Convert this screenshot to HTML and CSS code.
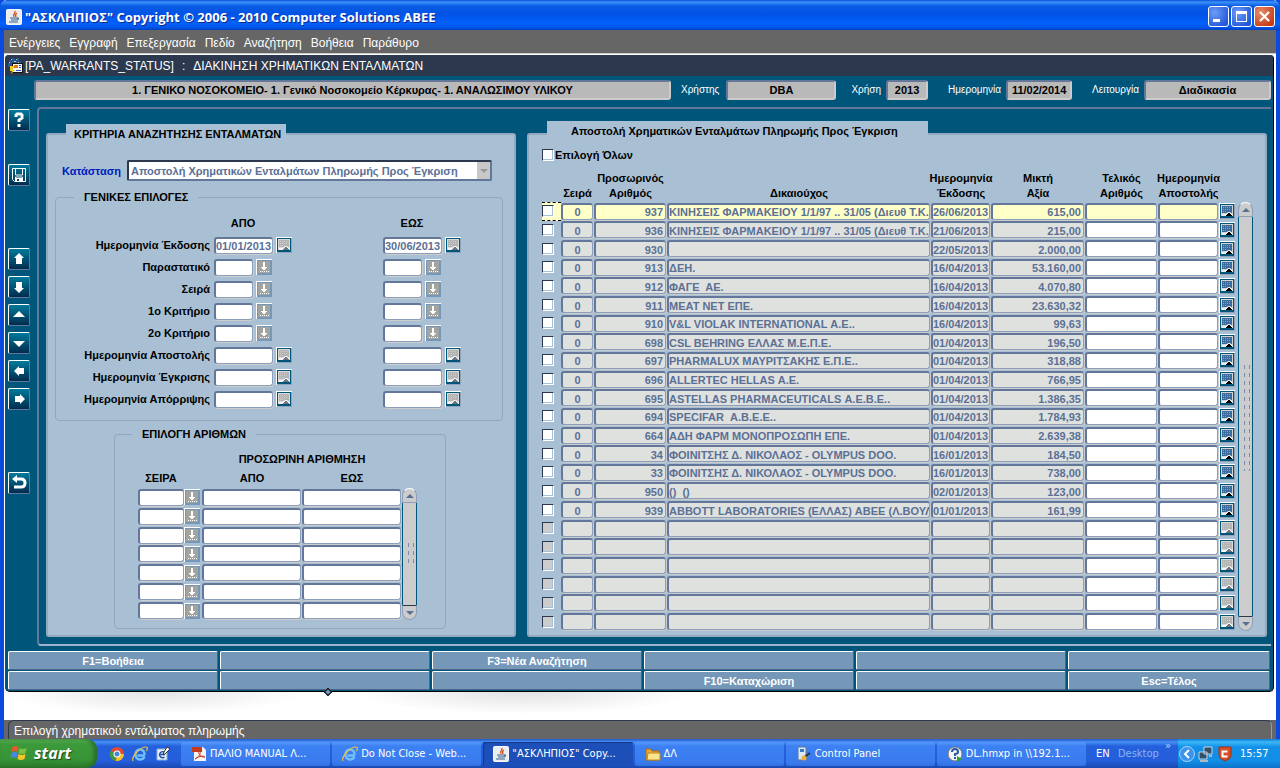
FILE: index.html
```
<!DOCTYPE html>
<html lang="el">
<head>
  <meta charset="UTF-8">
  <meta name="viewport" content="width=device-width, initial-scale=1.0">
  <title>ΑΣΚΛΗΠΙΟΣ</title>
  <link rel="stylesheet" href="styles.css">
</head>
<body>

<!-- Shared icons -->
<svg class="sprite" aria-hidden="true">
  <symbol id="ic-java" viewBox="0 0 16 16">
    <rect x="0.5" y="0.5" width="15" height="15" rx="1" fill="#e9ecf0" stroke="#f8f8f8"/>
    <path d="M9 2c1 2-3 3-1 6M11 4c-2 1-2 2-1 4" fill="none" stroke="#d8501c" stroke-width="1.3"/>
    <path d="M4 9h7M5 11h5M11 9c2-1 2 2-1 2M3 13h9" fill="none" stroke="#39618c" stroke-width="1.2"/>
  </symbol>
  <symbol id="ic-cal" viewBox="0 0 16 16">
    <path d="M0 0h16v1H1v15H0z" fill="#fff"/>
    <path d="M15 1h1v15H1v-1h14z" fill="#8fa3bb"/>
    <rect x="1" y="1" width="14" height="14" fill="#00557a"/>
    <rect x="2" y="2" width="12" height="11" fill="#d4d4d0"/>
    <rect x="3" y="3" width="10" height="7" fill="#3c6c9e"/>
    <path d="M4 4h1v1H4zM6 4h1v1H6zM8 4h1v1H8zM10 4h1v1h-1zM4 6h1v1H4zM6 6h1v1H6zM8 6h1v1H8zM10 6h1v1h-1zM4 8h1v1H4zM6 8h1v1H6z" fill="#7fa3cb"/>
    <path d="M3 11h4l2-2h2l3 3v1H3z" fill="#eee"/>
    <path d="M7 13v-1h1v-1h1v-1h2v1h1v1h1v1z" fill="#000"/>
  </symbol>
  <symbol id="ic-cal-off" viewBox="0 0 16 16">
    <path d="M0 0h16v1H1v15H0z" fill="#fff"/>
    <path d="M15 1h1v15H1v-1h14z" fill="#8fa3bb"/>
    <rect x="1" y="1" width="14" height="14" fill="#00557a"/>
    <rect x="2" y="2" width="12" height="11" fill="#dadad8"/>
    <rect x="3" y="3" width="10" height="7" fill="#b4b4b4"/>
    <path d="M4 4h1v1H4zM6 4h1v1H6zM8 4h1v1H8zM10 4h1v1h-1zM4 6h1v1H4zM6 6h1v1H6zM8 6h1v1H8zM10 6h1v1h-1zM4 8h1v1H4zM6 8h1v1H6z" fill="#cdcdcd"/>
    <path d="M3 11h4l2-2h2l3 3v1H3z" fill="#f4f4f4"/>
    <path d="M7 13v-1h1v-1h1v-1h2v1h1v1h1v1z" fill="#6c7680"/>
  </symbol>
  <symbol id="ic-lov" viewBox="0 0 16 16">
    <path d="M0 0h16v1H1v15H0z" fill="#fff"/>
    <path d="M1 1h15v15H1z" fill="#7597b8"/>
    <path d="M2 2h12v12H2z" fill="#a3a3a0"/>
    <path d="M7 3h2v5h2v1h-1v1H9v1H7v-1H6V9H5V8h2z" fill="#fff"/>
    <path d="M4 12.500h9" stroke="#fff" stroke-dasharray="1 1"/>
  </symbol>
  <symbol id="ic-ie" viewBox="0 0 16 16">
    <path d="M13 9.500H5.500M12.500 9C13 5 10 3.500 8 3.500 5.500 3.500 3.500 5.500 3.500 8.500s2 5 4.500 5c2 0 3.500-1 4.500-2.500" fill="none" stroke="#6fc0f8" stroke-width="2.400"/>
    <path d="M1 15C-1 11 8 1 14 1c2 0 1.500 2 .5 4" fill="none" stroke="#f0c040" stroke-width="1.200"/>
  </symbol>
</svg>

<div class="window">
  <header class="titlebar">
    <svg class="icon16"><use href="#ic-java"/></svg>
    <h1>"ΑΣΚΛΗΠΙΟΣ" Copyright © 2006 - 2010 Computer Solutions ABEE</h1>
    <div class="win-buttons">
      <button class="win-btn" aria-label="Minimize"><svg viewBox="0 0 19 19"><path d="M4 12h7v3H4z" fill="#fff"/></svg></button>
      <button class="win-btn" aria-label="Maximize"><svg viewBox="0 0 19 19"><path d="M4 4h11v11H4zM5 7v7h9V7z" fill="#fff" fill-rule="evenodd"/></svg></button>
      <button class="win-btn close" aria-label="Close"><svg viewBox="0 0 19 19"><path d="M5 5l9 9M14 5l-9 9" stroke="#fff" stroke-width="2.200"/></svg></button>
    </div>
  </header>

  <nav class="menubar">
    <a href="#">Ενέργειες</a>
    <a href="#">Εγγραφή</a>
    <a href="#">Επεξεργασία</a>
    <a href="#">Πεδίο</a>
    <a href="#">Αναζήτηση</a>
    <a href="#">Βοήθεια</a>
    <a href="#">Παράθυρο</a>
  </nav>

  <div class="form-window">
    <div class="form-title">
      <svg class="icon16" viewBox="0 0 16 16">
        <path d="M1 2h3V0h3v2h2V0h2v3h2v3H4v3H0V5h1z" fill="#2f5590"/>
        <path d="M3 1h1v1H3zM8 1h1v1H8zM1 4h1v1H1zM6 3h2v1H6zM10 4h1v1h-1z" fill="#9fd0a0"/>
        <path d="M4 5h11v10H4z" fill="#111"/>
        <path d="M5 6h9v8H5z" fill="#f4f4f4"/>
        <path d="M6 7h4v3H6z" fill="#e07818"/>
        <path d="M11 7h2v1h-2zM11 9h2v1h-2zM8 12h5v1H8z" fill="#3050c0"/>
        <path d="M2 8h4v2H5v2h2l-4 4 1-3H2z" fill="#f0d020"/>
      </svg>
      <span>[PA_WARRANTS_STATUS]</span><span>:</span><span>ΔΙΑΚΙΝΗΣΗ ΧΡΗΜΑΤΙΚΩΝ ΕΝΤΑΛΜΑΤΩΝ</span>
    </div>

    <div class="info-row">
      <output class="info f-unit">1. ΓΕΝΙΚΟ ΝΟΣΟΚΟΜΕΙΟ- 1. Γενικό Νοσοκομείο Κέρκυρας- 1. ΑΝΑΛΩΣΙΜΟΥ ΥΛΙΚΟΥ</output>
      <label for="user">Χρήστης</label><output id="user" class="info f-user">DBA</output>
      <label for="year">Χρήση</label><output id="year" class="info f-year">2013</output>
      <label for="date">Ημερομηνία</label><output id="date" class="info f-date">11/02/2014</output>
      <label for="mode">Λειτουργία</label><output id="mode" class="info f-mode">Διαδικασία</output>
    </div>

    <div class="main">
      <div class="toolbar">
        <button aria-label="Βοήθεια"><svg viewBox="0 0 20 20"><path d="M7 7V5l1-1h4l1 1v3l-3 2v2M10 14v3" fill="none" stroke="#fff" stroke-width="3"/></svg></button>
        <button class="save" aria-label="Αποθήκευση"><svg viewBox="0 0 20 20"><path d="M3.500 3.500h13v13h-11l-2-2zM6.500 4v6h7V4M6.500 16v-4h7v4" fill="none" stroke="#fff"/><path d="M7 13h6v3H7z" fill="#fff"/><path d="M8 14h2v2H8z" fill="#00406a"/></svg></button>
        <button class="first-nav" aria-label="Προηγούμενη"><svg viewBox="0 0 20 20"><path d="M10 4l5 5h-2v6H7V9H5z" fill="#fff"/></svg></button>
        <button aria-label="Επόμενη"><svg viewBox="0 0 20 20"><path d="M10 16l5-5h-2V5H7v6H5z" fill="#fff"/></svg></button>
        <button aria-label="Πάνω"><svg viewBox="0 0 20 20"><path d="M10 6l6 6H4z" fill="#fff"/></svg></button>
        <button aria-label="Κάτω"><svg viewBox="0 0 20 20"><path d="M10 14l6-6H4z" fill="#fff"/></svg></button>
        <button aria-label="Αριστερά"><svg viewBox="0 0 20 20"><path d="M5 10l5-5v2h5v6h-5v2z" fill="#fff"/></svg></button>
        <button aria-label="Δεξιά"><svg viewBox="0 0 20 20"><path d="M16 10l-5-5v2H6v6h5v2z" fill="#fff"/></svg></button>
        <button class="undo" aria-label="Έξοδος"><svg viewBox="0 0 20 20"><path d="M6 6h6q4 0 4 4t-4 4H5" fill="none" stroke="#fff" stroke-width="3"/><path d="M3 6l5-4v8z" fill="#fff"/></svg></button>
      </div>

      <div class="canvas">
        <section class="panel criteria">
          <h2 class="tab">ΚΡΙΤΗΡΙΑ ΑΝΑΖΗΤΗΣΗΣ ΕΝΤΑΛΜΑΤΩΝ</h2>
          <div class="state-row">
            <label for="state">Κατάσταση</label>
            <div class="select-box">
              <select id="state"><option>Αποστολή Χρηματικών Ενταλμάτων Πληρωμής Προς Έγκριση</option></select>
              <span class="select-arrow"></span>
            </div>
          </div>

          <fieldset class="general">
            <legend>ΓΕΝΙΚΕΣ ΕΠΙΛΟΓΕΣ</legend>
            <div class="range-grid" id="ranges">
              <span></span><b>ΑΠΟ</b><b>ΕΩΣ</b>
            </div>
          </fieldset>

          <fieldset class="numbers">
            <legend>ΕΠΙΛΟΓΗ ΑΡΙΘΜΩΝ</legend>
            <div class="table-wrap">
              <table class="num-table">
                <colgroup><col class="n-series"><col class="n-lov"><col><col></colgroup>
                <thead>
                  <tr><th></th><th></th><th colspan="2">ΠΡΟΣΩΡΙΝΗ ΑΡΙΘΜΗΣΗ</th></tr>
                  <tr><th>ΣΕΙΡΑ</th><th></th><th>ΑΠΟ</th><th>ΕΩΣ</th></tr>
                </thead>
                <tbody id="num-rows"></tbody>
              </table>
              <div class="scroll">
                <button class="cap up" aria-label="Πάνω"></button>
                <div class="track"><i class="grip short"></i></div>
                <button class="cap down" aria-label="Κάτω"></button>
              </div>
            </div>
          </fieldset>
        </section>

        <section class="panel results">
          <h2 class="tab">Αποστολή Χρηματικών Ενταλμάτων Πληρωμής Προς Έγκριση</h2>
          <div class="all-row"><input type="checkbox" id="all"><label for="all">Επιλογή Όλων</label></div>
          <div class="table-wrap">
            <table class="res-table">
              <colgroup>
                <col class="c-check"><col class="c-series"><col class="c-num"><col>
                <col class="c-date"><col class="c-value"><col class="c-final"><col class="c-sent"><col class="c-cal">
              </colgroup>
              <thead>
                <tr>
                  <th></th><th>Σειρά</th><th><span class="wide">Προσωρινός<br>Αριθμός</span></th><th>Δικαιούχος</th>
                  <th><span class="wide">Ημερομηνία<br>Έκδοσης</span></th><th>Μικτή<br>Αξία</th><th>Τελικός<br>Αριθμός</th>
                  <th><span class="wide">Ημερομηνία<br>Αποστολής</span></th><th></th>
                </tr>
              </thead>
              <tbody id="res-rows"></tbody>
            </table>
            <div class="scroll">
              <button class="cap up" aria-label="Πάνω"></button>
              <div class="track"><i class="grip"></i></div>
              <button class="cap down" aria-label="Κάτω"></button>
            </div>
          </div>
        </section>
      </div>
    </div>

    <div class="keys">
      <button>F1=Βοήθεια</button><button></button><button>F3=Νέα Αναζήτηση</button><button></button><button></button><button></button>
      <button></button><button></button><button></button><button>F10=Καταχώριση</button><button></button><button>Esc=Τέλος</button>
    </div>
    <span class="handle"></span>
  </div>

  <div class="backdrop"></div>
  <footer class="status"><span>Επιλογή χρηματικού εντάλματος πληρωμής</span></footer>
</div>

<div class="taskbar">
  <button class="start">
    <svg viewBox="0 0 20 18"><path d="M3 3q3-2 6 0L8 8Q5 6 2 8z" fill="#e8582c"/><path d="M10 4q3 2 7 0l-1 5q-4 2-7 0z" fill="#7cc142"/><path d="M2 9q3-2 6 0l-1 5q-3-2-6 0z" fill="#4a86ea"/><path d="M9 10q3 2 7 0l-1 5q-4 2-7 0z" fill="#f7c52c"/></svg>
    start
  </button>
  <div class="quick">
    <a href="#" aria-label="Chrome"><svg viewBox="0 0 16 16"><circle cx="8" cy="8" r="7" fill="#dd4b32"/><path d="M8 8L1.500 5A7 7 0 0 0 7 15z" fill="#3f9a45"/><path d="M8 8h7a7 7 0 0 1-8 7z" fill="#f2c32c"/><circle cx="8" cy="8" r="3.500" fill="#fff"/><circle cx="8" cy="8" r="2.500" fill="#4787d8"/></svg></a>
    <a href="#" aria-label="Internet Explorer"><svg><use href="#ic-ie"/></svg></a>
    <a href="#" aria-label="Show desktop"><svg viewBox="0 0 16 16"><path d="M2 3h10v11H2z" fill="#e8f0f8" stroke="#8ab0d8"/><path d="M10 8.500H5.500M10.500 8a3 3 0 1 0-1 3" fill="none" stroke="#1c50a8" stroke-width="1.500"/><path d="M12 1l3 2-5 5-2 1 1-3z" fill="#fff" stroke="#333"/></svg></a>
  </div>
  <div class="tasks">
    <button><svg viewBox="0 0 16 16"><path d="M3 1h9l3 3v11H3z" fill="#f6f6f6"/><path d="M1 1h10v5H1z" fill="#c43c20"/><path d="M4 13c6-3 6-8 4-8s1 7 6 6c-2-2-8 0-10 2z" fill="none" stroke="#d03a20"/></svg>ΠΑΛΙΟ MANUAL Λ...</button>
    <button><svg><use href="#ic-ie"/></svg>Do Not Close - Web...</button>
    <button class="active"><svg><use href="#ic-java"/></svg>"ΑΣΚΛΗΠΙΟΣ" Copy...</button>
    <button><svg viewBox="0 0 16 16"><path d="M1 3h5l1 2h7v9H1z" fill="#e8a838" stroke="#a86c10"/><path d="M3 7h12v7H2z" fill="#fbe58c" stroke="#c08820"/></svg>ΔΛ</button>
    <button><svg viewBox="0 0 16 16"><path d="M2 1h8v13H2z" fill="#dce8f4" stroke="#5878a0"/><path d="M4 3h4v3H4z" fill="#3878c0"/><path d="M7 12l7-5" stroke="#333" stroke-width="2"/><circle cx="8" cy="12" r="2.500" fill="#f0b030"/></svg>Control Panel</button>
    <button><svg viewBox="0 0 16 16"><circle cx="8" cy="8" r="7" fill="#f4f4f4" stroke="#777"/><path d="M5 6q0-3 3-3t3 3q0 2-3 2v2M8 11v2" fill="none" stroke="#2858a8" stroke-width="2"/><path d="M10 10l5 3-5 3z" fill="#30a030"/></svg>DL.hmxp in \\192.1...</button>
  </div>
  <div class="lang"><span class="en">EN</span><span class="desk">Desktop</span><span class="more">»</span></div>
  <div class="tray">
    <svg class="chev" viewBox="0 0 16 16"><circle cx="8" cy="8" r="7.500" fill="#3c94ec" stroke="#a8d4fc"/><path d="M10 4L6 8l4 4" fill="none" stroke="#fff" stroke-width="2"/></svg>
    <svg viewBox="0 0 16 16"><path d="M6 1h8v7H6zM1 6h8v7H1z" fill="#30506c" stroke="#c8d4e0"/><path d="M2 15h8M11 10h3" stroke="#b0b8c0" stroke-width="2"/></svg>
    <svg viewBox="0 0 16 16"><path d="M2 1h12v8q0 4-6 6-6-2-6-6z" fill="#d85028" stroke="#9c3010"/><path d="M10.500 5.500h-5v5h5" fill="none" stroke="#fff" stroke-width="2"/></svg>
    <time>15:57</time>
  </div>
</div>

<script>
  // label, field kind, from, to
  const ranges = [
    ['Ημερομηνία Έκδοσης', 'date', '01/01/2013', '30/06/2013'],
    ['Παραστατικό', 'code'],
    ['Σειρά', 'code'],
    ['1ο Κριτήριο', 'code'],
    ['2ο Κριτήριο', 'code'],
    ['Ημερομηνία Αποστολής', 'date'],
    ['Ημερομηνία Έγκρισης', 'date'],
    ['Ημερομηνία Απόρριψης', 'date']
  ];

  const warrants = [
    ['937', 'ΚΙΝΗΣΕΙΣ ΦΑΡΜΑΚΕΙΟΥ 1/1/97 .. 31/05 (Διευθ Τ.Κ.:1', '26/06/2013', '615,00'],
    ['936', 'ΚΙΝΗΣΕΙΣ ΦΑΡΜΑΚΕΙΟΥ 1/1/97 .. 31/05 (Διευθ Τ.Κ.:1', '21/06/2013', '215,00'],
    ['930', '', '22/05/2013', '2.000,00'],
    ['913', 'ΔΕΗ.', '16/04/2013', '53.160,00'],
    ['912', 'ΦΑΓΕ  ΑΕ.', '16/04/2013', '4.070,80'],
    ['911', 'MEAT NET ΕΠΕ.', '16/04/2013', '23.630,32'],
    ['910', 'V&L VIOLAK INTERNATIONAL Α.Ε..', '16/04/2013', '99,63'],
    ['698', 'CSL BEHRING ΕΛΛΑΣ Μ.Ε.Π.Ε.', '01/04/2013', '196,50'],
    ['697', 'PHARMALUX ΜΑΥΡΙΤΣΑΚΗΣ Ε.Π.Ε..', '01/04/2013', '318,88'],
    ['696', 'ALLERTEC HELLAS Α.Ε.', '01/04/2013', '766,95'],
    ['695', 'ASTELLAS PHARMACEUTICALS Α.Ε.Β.Ε..', '01/04/2013', '1.386,35'],
    ['694', 'SPECIFAR  Α.Β.Ε.Ε..', '01/04/2013', '1.784,93'],
    ['664', 'ΑΔΗ ΦΑΡΜ ΜΟΝΟΠΡΟΣΩΠΗ ΕΠΕ.', '01/04/2013', '2.639,38'],
    ['34', 'ΦΟΙΝΙΤΣΗΣ Δ. ΝΙΚΟΛΑΟΣ - OLYMPUS DOO.', '16/01/2013', '184,50'],
    ['33', 'ΦΟΙΝΙΤΣΗΣ Δ. ΝΙΚΟΛΑΟΣ - OLYMPUS DOO.', '16/01/2013', '738,00'],
    ['950', '()  ()', '02/01/2013', '123,00'],
    ['939', 'ABBOTT LABORATORIES (ΕΛΛΑΣ) ΑΒΕΕ (Λ.ΒΟΥΛΙ', '01/01/2013', '161,99']
  ];
  const visibleRows = 23;

  function iconButton(icon, label) {
    return `<button class="icon-btn" aria-label="${label}"><svg><use href="#${icon}"/></svg></button>`;
  }

  function field(value, cls, label) {
    return `<input type="text" class="field ${cls}" value="${value || ''}" aria-label="${label}">`;
  }

  document.getElementById('ranges').innerHTML += ranges.map(([label, kind, from, to], i) => {
    const btn = kind === 'date' ? iconButton('ic-cal-off', 'Ημερολόγιο') : iconButton('ic-lov', 'Λίστα');
    return `<label for="from${i}">${label}</label>
      <div class="pair"><input type="text" id="from${i}" class="field ${kind}" value="${from || ''}">${btn}</div>
      <div class="pair">${field(to, kind, label + ' έως')}${btn}</div>`;
  }).join('');

  document.getElementById('num-rows').innerHTML = Array.from({ length: 7 }, () => `<tr>
    <td>${field('', 'series', 'Σειρά')}</td><td>${iconButton('ic-lov', 'Λίστα')}</td>
    <td>${field('', '', 'Από')}</td><td>${field('', '', 'Έως')}</td></tr>`).join('');

  document.getElementById('res-rows').innerHTML = Array.from({ length: visibleRows }, (_, i) => {
    const w = warrants[i];
    const [num, name, date, value] = w || ['', '', '', ''];
    return `<tr class="${i === 0 ? 'current' : ''}">
      <td class="check"><input type="checkbox" aria-label="Επιλογή" ${w ? '' : 'disabled'}></td>
      <td>${field(w ? '0' : '', 'ro center', 'Σειρά')}</td>
      <td>${field(num, 'ro right', 'Προσωρινός Αριθμός')}</td>
      <td>${field(name, 'ro', 'Δικαιούχος')}</td>
      <td>${field(date, 'ro', 'Ημερομηνία Έκδοσης')}</td>
      <td>${field(value, 'ro right', 'Μικτή Αξία')}</td>
      <td>${field('', '', 'Τελικός Αριθμός')}</td>
      <td>${field('', '', 'Ημερομηνία Αποστολής')}</td>
      <td>${iconButton(w ? 'ic-cal' : 'ic-cal-off', 'Ημερολόγιο')}</td></tr>`;
  }).join('');
</script>

</body>
</html>
```
FILE: styles.css
```
* { box-sizing: border-box; }
body { margin: 0; min-height: 100vh; display: flex; flex-direction: column; font: bold 11px/14px "Liberation Sans", Arial, sans-serif; color: #000; background: #fff; }
button { margin: 0; padding: 0; border: 0; font: inherit; color: inherit; background: none; }
h1, h2 { margin: 0; font-size: inherit; }
.sprite { position: absolute; width: 0; height: 0; }
.icon16 { width: 16px; height: 16px; flex: none; }

/* Window frame */
.window { flex: 1; display: flex; flex-direction: column; border: solid #0a4ae0; border-width: 0 4px; background: #fff; }
.titlebar { height: 30px; margin: 0 -4px; padding: 3px 5px 0 6px; display: flex; align-items: center; gap: 3px; color: #fff; border-radius: 7px 7px 0 0; background: linear-gradient(#0a4cd8, #3c93fa 2px, #0a5ce4 6px, #0153e6 14px, #0361fb 24px, #0252e0 28px, #0140c0); }
.titlebar h1 { flex: 1; font: bold 13px/16px "Open Sans", sans-serif; text-shadow: 1px 1px #0a2a90; }
.win-buttons { display: flex; gap: 2px; }
.win-btn { width: 21px; height: 21px; border: 1px solid #fff; border-radius: 3px; background: radial-gradient(circle at 30% 30%, #6d9cf8, #2258d8 80%); }
.win-btn.close { background: radial-gradient(circle at 30% 30%, #e88c6c, #c83c14 80%); }
.win-btn svg { display: block; width: 19px; height: 19px; }
.menubar { height: 24px; padding: 2px 5px 0; display: flex; align-items: center; gap: 9px; background: #666; border-bottom: 1px solid #ccc; }
.menubar a { color: #fff; text-decoration: none; font: 12px/16px "Liberation Sans", Arial, sans-serif; }

/* Form */
.form-window { position: relative; margin: 1px 2px 0 1px; background: #00557a; border-bottom: 1px solid #000; border-right: 1px solid #000; border-radius: 4px 4px 5px 5px; }
.form-title { height: 21px; padding: 0 3px; display: flex; align-items: center; gap: 8px; color: #fff; background: #2b384e; border-radius: 4px 4px 0 0; font-weight: normal; font-size: 12px; }
.form-title .icon16 { margin-right: -7px; }
.info-row { display: flex; align-items: center; padding: 4px 2px 0 29px; color: #fff; }
.info-row label { font-weight: normal; font-size: 10px; text-align: right; padding: 0 5px 0 10px; }
.info { height: 20px; padding: 2px 4px 0; text-align: center; color: #000; background: #b9b9b9; border: 2px solid #63779b; border-right-color: #ccc; border-bottom-color: #ccc; border-radius: 3px; line-height: 13px; white-space: nowrap; }
.f-unit { flex: 1; }
.f-unit + label { padding-right: 7px; }
.f-user { width: 110px; }
.f-year { width: 42px; padding: 2px 0 0; }
.f-date { width: 66px; padding: 2px 0 0; }
.f-mode { width: 127px; }
.f-user + label { padding-left: 15px; }
.f-year + label, .f-date + label { padding-left: 20px; }

.main { display: flex; margin-top: 7px; }
.toolbar { width: 32px; padding: 2px 0 0 3px; display: flex; flex-direction: column; gap: 6px; }
.toolbar button { width: 22px; height: 22px; border: 1px solid #fff; border-right-color: #63779b; border-bottom-color: #63779b; border-radius: 2px; background: linear-gradient(#007a9c, #002c4e); }
.toolbar button:hover { background: #007a9c; }
.toolbar svg { display: block; width: 20px; height: 20px; }
.toolbar .save { margin-top: 27px; }
.toolbar .first-nav { margin-top: 56px; }
.toolbar .undo { margin-top: 56px; }
.canvas { flex: 1; min-width: 0; margin-right: 2px; padding: 24px 4px 7px 7px; display: flex; gap: 11px; border: 2px solid #63779b; border-right: 0; border-bottom-color: #9fb3cb; border-radius: 4px 0 0 4px; }
.panel { background: #a9c0d4; border: 2px solid #94a9bf; border-radius: 3px; }
.criteria { width: 470px; flex: none; }
.results { flex: 1; min-width: 0; }
.tab { width: fit-content; height: 19px; margin: -11px 0 0 18px; padding: 3px 5px 0 8px; background: #a9c0d4; font-size: 11px; line-height: 14px; white-space: nowrap; }
.results .tab { height: 21px; margin-top: -14px; padding: 3px 30px 0 24px; }

/* Fields */
.field { display: block; width: 100%; height: 17px; margin: 0; padding: 1px 0 0; font: inherit; line-height: 13px; color: #5b7095; background: #fff; border: solid #63779b; border-width: 2px 1px 1px 2px; border-right-color: #8c9fba; border-bottom-color: #8c9fba; border-radius: 3px; box-shadow: 1px 1px #ccc; }
.field.ro { background: #dfe1df; }
.field.center { text-align: center; }
.field.right { text-align: right; padding-right: 2px; }
.field:focus { outline: none; background: #ffffc8; }
.icon-btn, .icon-btn svg { display: block; width: 16px; height: 16px; }
input[type="checkbox"] { appearance: none; display: block; width: 12px; height: 12px; margin: 0; background: #fff; border: 1px solid #2b384e; border-right-color: #fff; border-bottom-color: #fff; box-shadow: inset -1px -1px #a9c0d4; }
input[type="checkbox"]:disabled { background: #ccc; }
input[type="checkbox"]:checked { background: #63779b; }

/* Criteria */
.state-row { display: flex; align-items: center; margin: 17px 22px 0 14px; gap: 6px; color: #0018c0; }
.state-row label { flex: none; }
.select-box { flex: 1; position: relative; }
.select-box select { display: block; width: 100%; height: 21px; padding: 0 16px 0 2px; appearance: none; font: inherit; color: #5b7095; background: #fff; border: 2px solid #2b384e; border-right-color: #63779b; border-bottom-color: #63779b; border-radius: 2px; }
.select-arrow { position: absolute; top: 2px; right: 2px; bottom: 2px; width: 13px; background: #c8c8c8; pointer-events: none; }
.select-arrow::after { content: ""; display: block; margin: 7px 3px; border: 4px solid transparent; border-top-color: #999; border-bottom: 0; }
fieldset { min-width: 0; margin: 0; padding: 0; border: 1px solid #94a5bd; border-radius: 4px; }
legend { margin-left: 18px; padding: 0 10px; }
.general { margin: 9px 11px 0 7px; padding-bottom: 10px; }
.range-grid { display: grid; grid-template-columns: 154px 169px 1fr; grid-auto-rows: 22px; align-items: center; padding-top: 8px; }
.range-grid b { width: 58px; margin-left: 4px; text-align: center; }
.range-grid label { text-align: right; }
.pair { display: flex; gap: 3px; padding-left: 4px; }
.pair .date { width: 59px; }
.pair .code { width: 39px; }
.numbers { width: 332px; margin: 6px 0 0 66px; padding: 0 28px 8px 23px; }
.numbers legend { margin-left: -6px; }
.table-wrap { display: flex; }
table { border-collapse: collapse; table-layout: fixed; width: 100%; }
th, td { padding: 0; }
th { font-weight: bold; vertical-align: bottom; line-height: 15px; }
.num-table { flex: 1; height: 179px; }
.num-table th { height: 19px; line-height: 19px; }
.num-table thead tr:first-child th { height: 28px; }
.num-table td:nth-child(n+3) { padding-right: 1px; }
.n-series { width: 46px; }
.n-lov { width: 18px; }

.scroll { flex: none; width: 15px; margin-top: 47px; display: flex; flex-direction: column; }
.cap { height: 15px; border: 1px solid #8c9fba; background: #ccc; }
.cap.up { border-radius: 8px 8px 0 0; border-top-color: #fff; }
.cap.down { border-radius: 0 0 8px 8px; border-top-color: #2b384e; }
.cap::after { content: ""; display: block; width: 0; margin: 0 auto; border: 4px solid transparent; }
.cap.up::after { border-bottom-color: #5b7095; border-top: 0; }
.cap.down::after { border-top-color: #5b7095; border-bottom: 0; }
.track { flex: 1; display: flex; align-items: center; justify-content: center; background: #ccc; border: solid #00557a; border-width: 0 1px; }
.grip { width: 8px; height: 108px; background: radial-gradient(#7c8cae 1px, transparent 1px) 0 0 / 5px 8px; }
.grip.short { height: 26px; }

/* Results */
.all-row { display: flex; align-items: center; gap: 1px; margin: 4px 0 0 13px; height: 18px; }
.results .table-wrap { margin: 6px 12px 0 13px; padding-bottom: 4px; }
.res-table { flex: 1; height: 461px; }
.res-table thead th { height: 32px; padding-bottom: 1px; }
.wide { display: block; margin: 0 -6px; }
.res-table td { padding-right: 1px; }
.c-check { width: 19px; }
.c-series { width: 33px; }
.c-num { width: 73px; }
.c-date { width: 60px; }
.c-value { width: 94px; }
.c-final { width: 73px; }
.c-sent { width: 61px; }
.c-cal { width: 18px; }
.current .field, .current .field.ro { background: #ffffc8; }
.current .check { background: #ffffc8; border: dashed #000; border-width: 1px 0; }
.results .scroll { margin-top: 32px; margin-left: 1px; }

/* Function keys */
.keys { display: grid; grid-template-columns: repeat(5, 211fr) 203fr; gap: 1px; padding: 5px 2px 1px 3px; }
.keys button { height: 19px; color: #fff; background: #7597b8; border: 1px solid #fff; border-right-color: #4a6488; border-bottom-color: #4a6488; border-radius: 2px; margin-right: 1px; }
.keys button:active { background: #63779b; }
.handle { position: absolute; left: 320px; bottom: -4px; width: 6px; height: 6px; background: #7597b8; border: 1px solid #000; transform: rotate(45deg); }

.backdrop { flex: 1; min-height: 28px; background: radial-gradient(ellipse 150px 22px at 150px 0, #e4e4e4, transparent), radial-gradient(ellipse 170px 22px at 520px 0, #e2e2e2, transparent), #fff; }
.status { height: 19px; padding-left: 4px; color: #fff; background: #666; }
.status span { display: block; height: 19px; margin-right: 4px; padding: 3px 5px 0; border: 1px solid #2b384e; border-bottom: 0; border-right-color: #8c9fba; border-radius: 6px 6px 0 0; font: 12px/14px "Liberation Sans", Arial, sans-serif; }

/* Taskbar */
.taskbar { height: 29px; display: flex; align-items: stretch; color: #fff; font: 11px/14px "DejaVu Sans Condensed", "Noto Sans", sans-serif; background: linear-gradient(#2458c8, #4690f4 3px, #2560dc 7px, #245edb 22px, #1a48b0); }
.taskbar svg { width: 16px; height: 16px; flex: none; }
.start { width: 97px; display: flex; align-items: center; gap: 4px; padding: 0 0 2px 9px; border-radius: 0 10px 10px 0; font: italic bold 16px/20px "Open Sans", sans-serif; text-shadow: 1px 1px 1px #1c4a18; background: linear-gradient(#5fb55c, #3c9a3a 5px, #389436 20px, #2a7a2a); box-shadow: inset -3px 0 4px #2a6a2a; }
.taskbar .start svg { width: 21px; height: 18px; }
.quick { width: 84px; padding-left: 12px; display: flex; align-items: center; gap: 7px; }
.quick a, .quick svg { display: block; }
.tasks { flex: 1; min-width: 0; display: grid; grid-template-columns: repeat(6, 1fr); gap: 2px; padding: 3px 0 2px; }
.tasks button { min-width: 0; display: flex; align-items: center; gap: 3px; padding-left: 10px; white-space: nowrap; overflow: hidden; border-radius: 2px; background: linear-gradient(#5a98fa, #3c81f3 4px, #3a7bee 20px, #3170e0); }
.tasks .active { background: #1c4fb8; box-shadow: inset 1px 1px 1px #12388a; }
.lang { width: 92px; padding-left: 10px; display: flex; align-items: center; }
.en { width: 22px; }
.desk { width: 47px; color: #8ab4f4; }
.more { align-self: flex-start; color: #b8d4fc; }
.tray { width: 102px; display: flex; align-items: center; gap: 3px; padding-left: 1px; background: linear-gradient(#0d7ad8, #3cb8f8 3px, #1290e8 8px, #128ee6 22px, #0c70c8); }
.tray time { margin-left: 4px; }
```
